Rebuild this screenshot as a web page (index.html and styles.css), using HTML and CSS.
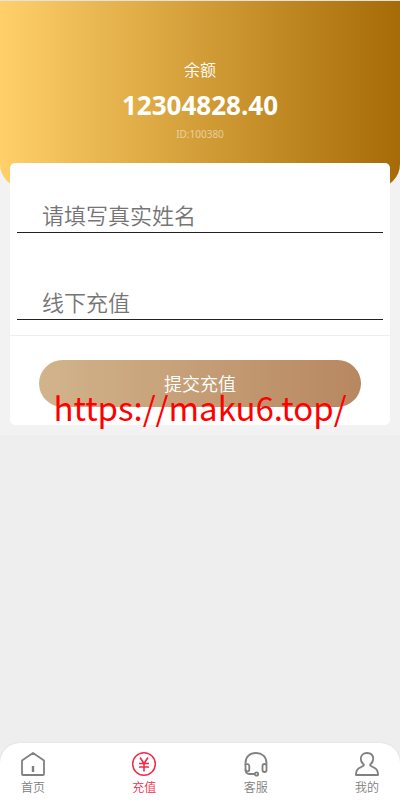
FILE: index.html
```html
<!DOCTYPE html>
<html lang="zh-CN">
<head>
  <meta charset="UTF-8" />
  <meta name="viewport" content="width=device-width, initial-scale=1.0"/>
  <title>充值</title>
  <link rel="stylesheet" href="styles.css">
</head>
<body>
  <main class="page">
    <header class="balance">
      <div class="balance-label">余额</div>
      <div class="balance-amount">12304828.40</div>
      <div class="balance-id">ID:100380</div>
    </header>

    <form class="card">
      <div class="fields">
        <input class="field" type="text" name="realname" aria-label="真实姓名" placeholder="请填写真实姓名">
        <input class="field" type="text" name="amount" aria-label="线下充值" placeholder="线下充值">
      </div>
      <div class="actions">
        <button class="btn-submit" type="button">提交充值</button>
        <div class="site-mark">https://maku6.top/</div>
      </div>
    </form>
  </main>

  <nav class="tabbar">
    <a class="tab" href="#home">
      <svg class="tab-icon" viewBox="0 0 26 26">
        <path d="M2 9.500 13 2l11 7.500V23a1 1 0 0 1-1 1H3a1 1 0 0 1-1-1Z"/>
        <path d="M13 15v6" stroke-width="2.4"/>
      </svg>
      <span>首页</span>
    </a>
    <a class="tab active" href="#recharge">
      <svg class="tab-icon" viewBox="0 0 26 26">
        <circle cx="13" cy="13" r="11.3" stroke-width="1.5"/>
        <path d="M9 6.500 13 12.500 17 6.500M13 12.500V20.500M8 12.500h10M8 16h10" stroke-width="1.6"/>
      </svg>
      <span>充值</span>
    </a>
    <a class="tab" href="#service">
      <svg class="tab-icon" viewBox="0 0 26 26">
        <path d="M2.500 14V12C2.500 5.500 7 2 13 2s10.500 3.500 10.500 10v2"/>
        <path d="M2.500 13.500C5 12.500 6.300 13.300 6.300 15.500v3c0 2.500-3.800 2.500-3.800 0Z"/>
        <rect x="19.500" y="13" width="4" height="8" rx="2"/>
        <path d="M2.500 18.500c0 3.500 1.500 4.500 4 4.500h5"/>
        <circle cx="13.500" cy="23" r="1.700"/>
      </svg>
      <span>客服</span>
    </a>
    <a class="tab" href="#mine">
      <svg class="tab-icon" viewBox="0 0 26 26">
        <path d="M9.800 13.500C7.800 12 6.800 10 6.800 7.800 6.800 4.200 9.200 2 13 2s6.200 2.200 6.200 5.800c0 2.200-1 4.200-3 5.700v1l5.300 3c1.800 1.200 2.500 3 2.500 6.500H2c0-3.500.7-5.300 2.500-6.500l5.300-3Z"/>
      </svg>
      <span>我的</span>
    </a>
  </nav>
</body>
</html>
```

FILE: styles.css
```css
* {
  box-sizing: border-box;
}
body {
  margin: 0;
  min-height: 100vh;
  display: flex;
  flex-direction: column;
  justify-content: space-between;
  background: #eee;
  font-family: "Noto Sans", "Noto Sans CJK SC", sans-serif;
  font-weight: 350;
}
.page {
  background: #f2f2f2;
  border-top: 1px solid #dfe3e6;
  padding-bottom: 10px;
}
.balance {
  height: 187px;
  padding-top: 57px;
  border-radius: 0 0 24px 24px;
  background: linear-gradient(to right, #ffd06a, #a66b06);
  color: #fff;
  text-align: center;
}
.balance-label {
  font-size: 16px;
  line-height: 24px;
}
.balance-amount {
  font-family: "Open Sans", "Noto Sans", sans-serif;
  font-size: 26px;
  font-weight: bold;
  line-height: 46px;
}
.balance-id {
  font-size: 10px;
  font-weight: 400;
  line-height: 12px;
  opacity: 0.5;
}
.card {
  margin: -25px 10px 0;
  border-radius: 5px;
  background: #fff;
}
.fields {
  padding: 30px 7px 15px;
  border-bottom: 1px solid #eee;
  display: flex;
  flex-direction: column;
  gap: 47px;
}
.field {
  width: 100%;
  height: 40px;
  padding: 4px 25px 0;
  border: none;
  border-bottom: 1px solid #222;
  background: none;
  font-family: inherit;
  font-size: 22px;
  font-weight: inherit;
  outline: none;
}
.field::placeholder {
  color: #757575;
}
.actions {
  position: relative;
  padding: 24px 29px 18px;
}
.btn-submit {
  display: block;
  width: 100%;
  height: 47px;
  padding: 0 0 2px;
  border: none;
  border-radius: 24px;
  background: linear-gradient(to right, #d2b48c, #b78760);
  color: #fff;
  font-family: inherit;
  font-size: 18px;
  font-weight: inherit;
  cursor: pointer;
}
.site-mark {
  position: absolute;
  left: 0;
  right: 0;
  top: 47px;
  color: #f00;
  font-family: "Noto Sans CJK SC", sans-serif;
  font-size: 33px;
  font-weight: 400;
  line-height: 48px;
  text-align: center;
  pointer-events: none;
}
.tabbar {
  position: sticky;
  bottom: 0;
  display: flex;
  justify-content: space-between;
  padding: 8px 20px 1px;
  border-radius: 20px 20px 0 0;
  background: #fff;
  box-shadow: 0 0 2px rgba(0, 0, 0, 0.1);
}
.tab {
  display: flex;
  flex-direction: column;
  align-items: center;
  color: #808080;
  font-size: 12px;
  line-height: 22px;
  text-decoration: none;
}
.tab.active {
  color: #f5294a;
}
.tab-icon {
  width: 26px;
  height: 26px;
  fill: none;
  stroke: currentColor;
  stroke-width: 1.8;
  stroke-linejoin: round;
}
```
